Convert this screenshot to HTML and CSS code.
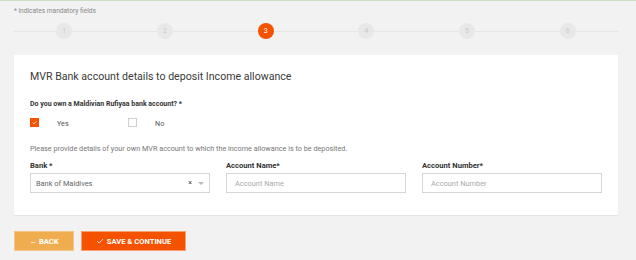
FILE: index.html
```html
<!DOCTYPE html>
<html>
<head>
<meta charset="utf-8">
<link rel="stylesheet" href="styles.css">
</head>
<body>
<div class="page">
  <p class="mandatory">* indicates mandatory fields</p>
  <div class="stepper">
    <div class="step"><span class="dot">1</span></div>
    <div class="step"><span class="dot">2</span></div>
    <div class="step"><span class="dot active">3</span></div>
    <div class="step"><span class="dot">4</span></div>
    <div class="step"><span class="dot">5</span></div>
    <div class="step"><span class="dot">6</span></div>
  </div>
  <div class="card">
    <h2 class="title">MVR Bank account details to deposit Income allowance</h2>
    <p class="question">Do you own a Maldivian Rufiyaa bank account? *</p>
    <div class="options">
      <label class="option"><span class="box checked"><svg viewBox="0 0 10 10" width="9" height="9"><path d="M2.2 5.2 L4.1 7 L7.8 3.2" fill="none" stroke="#fff" stroke-width="1.1"/></svg></span><span class="opt-text">Yes</span></label>
      <label class="option"><span class="box"></span><span class="opt-text">No</span></label>
    </div>
    <p class="help">Please provide details of your own MVR account to which the income allowance is to be deposited.</p>
    <div class="fields">
      <div class="field">
        <div class="label">Bank *</div>
        <div class="control select">
          <span class="value">Bank of Maldives</span>
          <span class="clear">×</span>
          <span class="caret"></span>
        </div>
      </div>
      <div class="field">
        <div class="label">Account Name*</div>
        <div class="control"><span class="ph">Account Name</span></div>
      </div>
      <div class="field">
        <div class="label">Account Number*</div>
        <div class="control"><span class="ph">Account Number</span></div>
      </div>
    </div>
  </div>
  <div class="actions">
    <button class="btn back">← BACK</button>
    <button class="btn save"><svg viewBox="0 0 10 10" width="8" height="8"><path d="M1.5 5.3 L4 7.6 L8.6 2.6" fill="none" stroke="#fff" stroke-width="0.9"/></svg>SAVE &amp; CONTINUE</button>
  </div>
</div>
</body>
</html>
```
FILE: styles.css
```css
* { box-sizing: border-box; }
html, body { margin: 0; padding: 0; }
body {
  background: #f2f2f2;
  font-family: Roboto, "Liberation Sans", sans-serif;
  color: #333;
  width: 636px;
  height: 260px;
  overflow: hidden;
  border-top: 1px solid #c9dfc4;
}
.page { padding: 0 18px 0 14px; }
.mandatory {
  margin: 0;
  padding-top: 6px;
  height: 17px;
  font-size: 6.6px;
  line-height: 9px;
  color: #888;
}
.stepper {
  display: flex;
  height: 26px;
  align-items: center;
  background: linear-gradient(#e6e6e6, #e6e6e6) center / 100% 1px no-repeat;
}
.step { flex: 1; display: flex; justify-content: center; }
.dot {
  width: 16px; height: 16px;
  border-radius: 50%;
  background: #e8e8e8;
  color: #c8c8c8;
  font-size: 7px;
  display: flex; align-items: center; justify-content: center;
}
.dot.active { background: #f55200; color: #fff; }
.card {
  margin-top: 11px;
  background: #fff;
  height: 160px;
  padding: 15px 16px 0 16px;
  box-shadow: 0 1px 1px rgba(0,0,0,0.06);
}
.title {
  margin: 0;
  font-size: 10.6px;
  font-weight: 400;
  line-height: 14px;
  color: #3a3a3a;
}
.question {
  margin: 16px 0 0;
  font-size: 7px;
  font-weight: 700;
  line-height: 9px;
  color: #333;
}
.options { display: flex; margin-top: 6px; height: 14px; align-items: center; }
.option { display: flex; align-items: center; width: 98px; }
.box {
  width: 9px; height: 9px;
  border: 1px solid #cfcfcf;
  background: #fff;
  display: flex; align-items: center; justify-content: center;
}
.box.checked { background: #f55200; border-color: #f55200; }
.opt-text { margin-left: 18px; font-size: 7.2px; color: #555; margin-top: 3px; }
.help {
  margin: 15px 0 0;
  font-size: 7.25px;
  line-height: 9px;
  color: #777;
}
.fields { display: grid; grid-template-columns: 180px 180px 180px; column-gap: 16px; margin-top: 8px; }
.label { font-size: 7.6px; font-weight: 700; line-height: 9px; color: #333; height: 12px; }
.control {
  height: 20px;
  border: 1px solid #d6d6d6;
  display: flex;
  align-items: center;
  padding: 0 8px;
  font-size: 7.4px;
}
.control.select { padding: 0 4px 0 5px; }
.ph { color: #aaa; }
.value { color: #666; flex: 1; }
.clear { color: #444; font-size: 7px; margin-right: 6px; }
.caret {
  width: 0; height: 0;
  border-left: 3px solid transparent;
  border-right: 3px solid transparent;
  border-top: 3px solid #bbb;
  margin-right: 1px;
}
.actions { display: flex; gap: 7px; margin-top: 16px; }
.btn {
  height: 20px;
  border: 1px solid transparent;
  color: #fff;
  font-family: Roboto, "Liberation Sans", sans-serif;
  font-weight: 700;
  font-size: 7.6px;
  display: flex; align-items: center; justify-content: center;
  gap: 3px;
  padding: 0;
}
.back { width: 60px; background: #f0ad50; border-color: #f5c58a; }
.save { width: 105px; background: #f55200; border-color: #f8a070; }
```
